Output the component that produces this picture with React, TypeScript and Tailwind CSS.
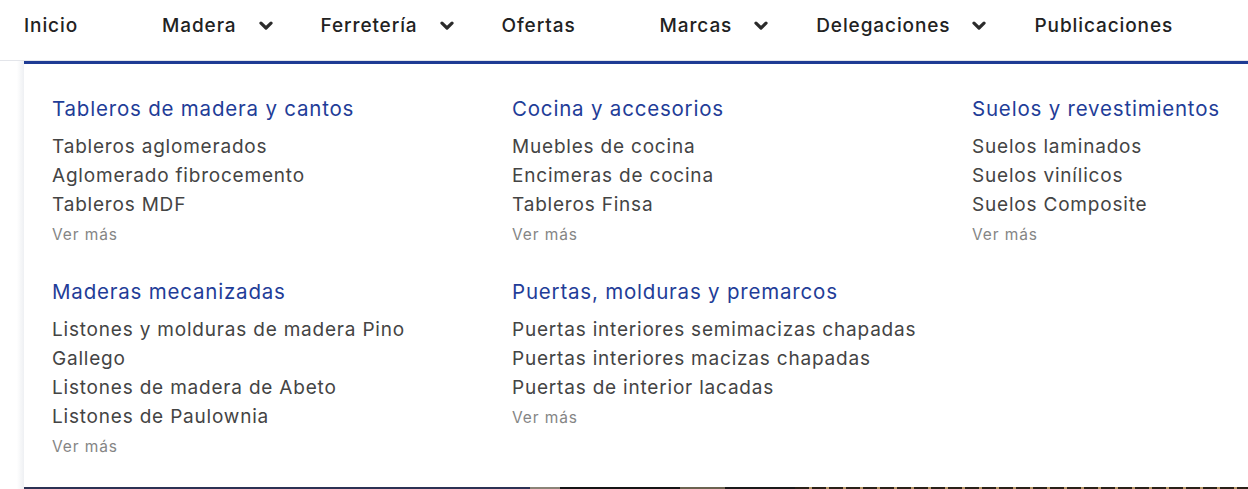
import { Fragment } from 'react'

interface MenuGroup {
  title: string
  links: string[]
}

const navItems: { label: string; dropdown: boolean }[] = [
  { label: 'Inicio', dropdown: false },
  { label: 'Madera', dropdown: true },
  { label: 'Ferretería', dropdown: true },
  { label: 'Ofertas', dropdown: false },
  { label: 'Marcas', dropdown: true },
  { label: 'Delegaciones', dropdown: true },
  { label: 'Publicaciones', dropdown: false },
]

const groups: MenuGroup[] = [
  {
    title: 'Tableros de madera y cantos',
    links: ['Tableros aglomerados', 'Aglomerado fibrocemento', 'Tableros MDF'],
  },
  {
    title: 'Cocina y accesorios',
    links: ['Muebles de cocina', 'Encimeras de cocina', 'Tableros Finsa'],
  },
  {
    title: 'Suelos y revestimientos',
    links: ['Suelos laminados', 'Suelos vinílicos', 'Suelos Composite'],
  },
  {
    title: 'Maderas mecanizadas',
    links: [
      'Listones y molduras de madera Pino',
      'Gallego',
      'Listones de madera de Abeto',
      'Listones de Paulownia',
    ],
  },
  {
    title: 'Puertas, molduras y premarcos',
    links: [
      'Puertas interiores semimacizas chapadas',
      'Puertas interiores macizas chapadas',
      'Puertas de interior lacadas',
    ],
  },
]

function Chevron() {
  return (
    <svg width="14" height="10" viewBox="0 0 14 10" className="text-[#2b2b2b]">
      <path
        d="M2 2.2 L7 7 L12 2.2"
        fill="none"
        stroke="currentColor"
        strokeWidth="3.2"
        strokeLinecap="round"
        strokeLinejoin="round"
      />
    </svg>
  )
}

function NavBar() {
  return (
    <nav className="h-[61px] flex items-start pt-[14px] pl-[24px] gap-[48px] border-b border-[#e3e5ea]">
      {navItems.map((item) => (
        <div key={item.label} className="flex items-center h-[24px]">
          <span className="text-[19px] leading-[24px] font-medium text-[#222222] tracking-[0.9px]">
            {item.label}
          </span>
          <span className="ml-[22px] w-[14px] flex items-center">
            {item.dropdown && <Chevron />}
          </span>
        </div>
      ))}
    </nav>
  )
}

function GroupBlock({ group }: { group: MenuGroup }) {
  return (
    <div className="flex flex-col">
      <h3 className="text-[20.5px] leading-[28px] font-normal text-[#1f3d98] tracking-[0.8px] mb-[9px]">
        {group.title}
      </h3>
      {group.links.map((link) => (
        <a key={link} className="text-[19px] leading-[29px] text-[#444444] tracking-[0.8px]">
          {link}
        </a>
      ))}
      <a className="text-[15.5px] leading-[30px] mt-[1px] text-[#858585] tracking-[0.9px]">
        Ver más
      </a>
    </div>
  )
}

export default function App() {
  return (
    <div className="w-[1248px] h-[489px] bg-white overflow-hidden font-['Inter',sans-serif] flex flex-col">
      <NavBar />
      <div className="flex flex-1 min-h-0">
        <div className="w-[24px] flex-none bg-gradient-to-r from-white from-70% to-[#eef0f3]" />
        <div className="flex-1 flex flex-col">
          <div className="flex-1 bg-white border-t-[3px] border-[#1e3b94] pt-[31px] pl-[28px]">
            <div className="grid grid-cols-[460px_460px_1fr] gap-y-[28px]">
              {groups.map((g) => (
                <Fragment key={g.title}>
                  <GroupBlock group={g} />
                </Fragment>
              ))}
            </div>
          </div>
          <div className="h-[2px] flex-none flex">
            <div className="w-[506px] bg-[#2c3254]" />
            <div className="w-[30px] bg-[#8a8478]" />
            <div className="w-[120px] bg-[#151515]" />
            <div className="w-[45px] bg-[#6b6350]" />
            <div className="w-[70px] bg-[#1a1a1a]" />
            <div className="flex-1 bg-[repeating-linear-gradient(90deg,#2a2118_0px,#2a2118_14px,#b89868_14px,#b89868_17px)]" />
          </div>
        </div>
      </div>
    </div>
  )
}
